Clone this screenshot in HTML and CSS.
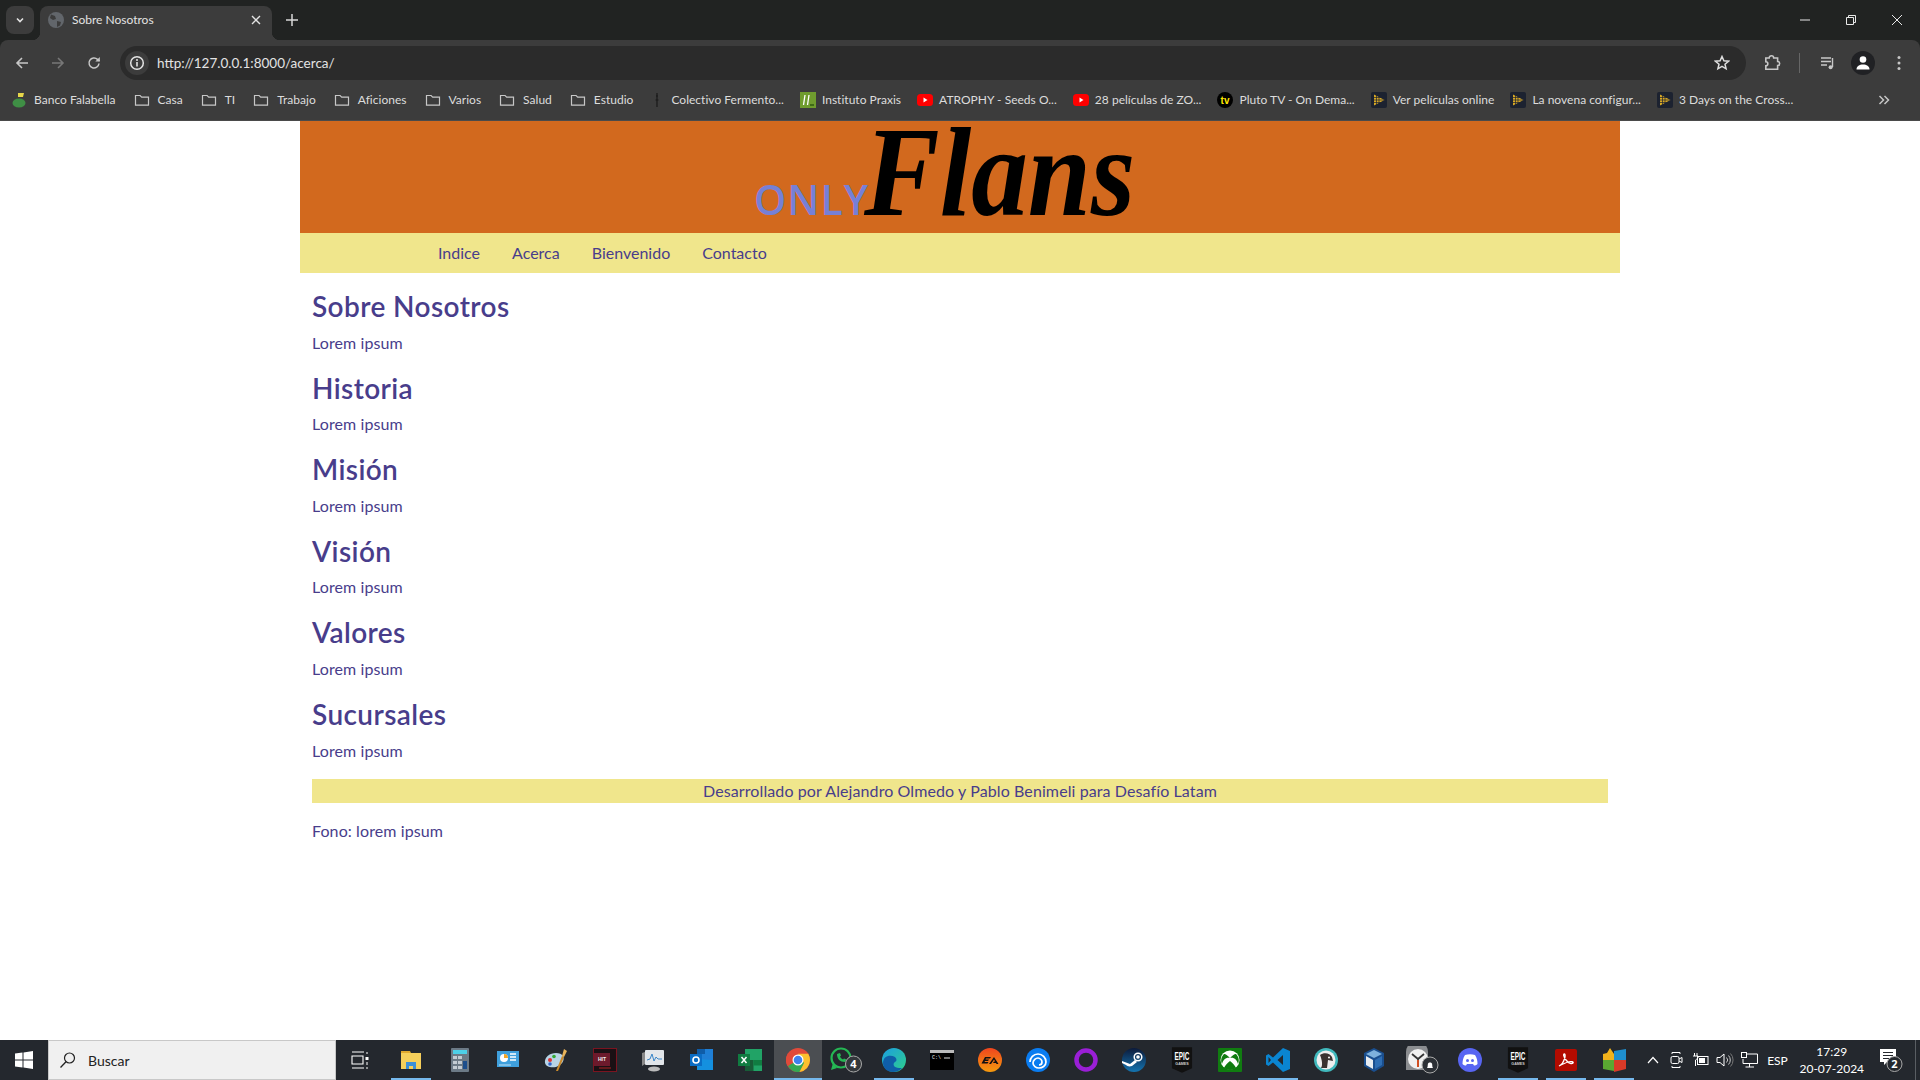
FILE: index.html

```html
<!DOCTYPE html>
<html lang="es">
<head>
  <meta charset="UTF-8">
  <title>Sobre Nosotros</title>
  <link rel="stylesheet" href="styles.css">
</head>
<body>

<svg class="defs" width="0" height="0">
  <symbol id="folder" viewBox="0 0 20 16">
    <path d="M3.500 3.500h4.600l1.600 1.600h6.800v8H3.500z" fill="none" stroke="#c7c7c7" stroke-width="1.200"/>
  </symbol>
  <symbol id="yt" viewBox="0 0 16 16">
    <rect x="0" y="2" width="16" height="12" rx="3.500" fill="#f00"/>
    <path d="M6.500 5.600v4.800L10.500 8z" fill="#fff"/>
  </symbol>
  <symbol id="gold" viewBox="0 0 16 16">
    <rect width="16" height="16" rx="2" fill="#1c2230"/>
    <path d="M3 2.500v11L13.500 8z" fill="#d9a925"/>
    <path d="M5.500 3v10M8 4.500v7M3 5.500h8M3 8h10M3 10.500h8" stroke="#1c2230" stroke-width=".7"/>
  </symbol>
</svg>

<div class="browser">
  <div class="tabstrip">
    <div class="tab-search">
      <svg width="12" height="12" viewBox="0 0 12 12"><path d="M3 4.500l3 3 3-3" fill="none" stroke="#e3e3e3" stroke-width="1.600"/></svg>
    </div>
    <div class="tab">
      <svg class="tab-icon" width="16" height="16" viewBox="0 0 16 16">
        <circle cx="8" cy="8" r="8" fill="#62666b"/>
        <path d="M3 2.500l4 1.500 1 3-3 1-3-2zM9 9l4 1-1 3.500-3 1.500z" fill="#3c3c3c"/>
      </svg>
      <span class="tab-title">Sobre Nosotros</span>
      <svg class="tab-close" width="10" height="10" viewBox="0 0 10 10"><path d="M1 1l8 8M9 1l-8 8" stroke="#e3e3e3" stroke-width="1.400"/></svg>
    </div>
    <svg class="tab-new" width="12" height="12" viewBox="0 0 12 12"><path d="M6 0v12M0 6h12" stroke="#d8d8d8" stroke-width="1.500"/></svg>
    <div class="win-buttons">
      <svg width="12" height="12" viewBox="0 0 12 12"><path d="M1 6h10" stroke="#e8e8e8"/></svg>
      <svg width="12" height="12" viewBox="0 0 12 12"><path d="M1.500 3.500h7v7h-7zM3.500 3.500v-2h7v7h-2" fill="none" stroke="#e8e8e8"/></svg>
      <svg width="12" height="12" viewBox="0 0 12 12"><path d="M1 1l10 10M11 1L1 11" stroke="#e8e8e8"/></svg>
    </div>
  </div>

  <div class="toolbar">
    <svg class="tool back" width="14" height="14" viewBox="0 0 14 14"><path d="M13 7H2M7 2L2 7l5 5" fill="none" stroke="#c7c7c7" stroke-width="1.600"/></svg>
    <svg class="tool forward" width="14" height="14" viewBox="0 0 14 14"><path d="M1 7h11M7 2l5 5-5 5" fill="none" stroke="#777" stroke-width="1.600"/></svg>
    <svg class="tool reload" width="14" height="14" viewBox="0 0 14 14"><path d="M12 7.500A5 5 0 1 1 10.500 3.400L12.500 5" fill="none" stroke="#c7c7c7" stroke-width="1.500"/><path d="M12.800 1v4.500H8.300z" fill="#c7c7c7"/></svg>
    <div class="urlbar">
      <div class="url-info">
        <svg width="16" height="16" viewBox="0 0 16 16"><circle cx="8" cy="8" r="6.300" fill="none" stroke="#e3e3e3" stroke-width="1.500"/><path d="M8 7v4.500" stroke="#e3e3e3" stroke-width="1.600"/><circle cx="8" cy="4.900" r="1" fill="#e3e3e3"/></svg>
      </div>
      <span class="url-text">http://127.0.0.1:8000/acerca/</span>
      <svg class="url-star" width="16" height="16" viewBox="0 0 16 16"><path d="M8 1.500l1.900 4.300 4.600.4-3.500 3 1.100 4.600L8 11.400l-4.100 2.400 1.100-4.600-3.500-3 4.600-.4z" fill="none" stroke="#dedede" stroke-width="1.500"/></svg>
    </div>
    <svg class="tool puzzle" width="18" height="18" viewBox="0 0 16 16"><path d="M2.500 3.500h3a2 2 0 0 1 4 0h3.500v3.200a1.800 1.800 0 0 1 0 3.600v3.200H2.500v-3a1.800 1.800 0 0 0 0-3.600z" fill="none" stroke="#c7c7c7" stroke-width="1.400"/></svg>
    <span class="tool-divider"></span>
    <svg class="tool media" width="16" height="16" viewBox="0 0 16 16"><path d="M1 3h10M1 6.500h10M1 10h6" stroke="#c7c7c7" stroke-width="1.400"/><path d="M12.500 3v9" stroke="#c7c7c7" stroke-width="1.400"/><circle cx="10.600" cy="12.200" r="2" fill="#c7c7c7"/></svg>
    <div class="avatar">
      <svg width="16" height="16" viewBox="0 0 16 16"><circle cx="8" cy="4.500" r="3.300" fill="#fff"/><path d="M1.500 14.500c0-3.500 3-5 6.500-5s6.500 1.500 6.500 5z" fill="#fff"/></svg>
    </div>
    <svg class="tool dots" width="4" height="16" viewBox="0 0 4 16"><circle cx="2" cy="2.500" r="1.500" fill="#c7c7c7"/><circle cx="2" cy="8" r="1.500" fill="#c7c7c7"/><circle cx="2" cy="13.500" r="1.500" fill="#c7c7c7"/></svg>
  </div>

  <div class="bookmarks">
    <div class="bm">
      <svg width="16" height="16" viewBox="0 0 16 16"><path d="M6 1h6l-1 4H6z" fill="#e6d64a"/><ellipse cx="7" cy="11" rx="6.500" ry="4.500" fill="#3f8f45"/></svg>
      <span>Banco Falabella</span>
    </div>
    <div class="bm"><svg width="20" height="16"><use href="#folder"/></svg><span>Casa</span></div>
    <div class="bm"><svg width="20" height="16"><use href="#folder"/></svg><span>TI</span></div>
    <div class="bm"><svg width="20" height="16"><use href="#folder"/></svg><span>Trabajo</span></div>
    <div class="bm"><svg width="20" height="16"><use href="#folder"/></svg><span>Aficiones</span></div>
    <div class="bm"><svg width="20" height="16"><use href="#folder"/></svg><span>Varios</span></div>
    <div class="bm"><svg width="20" height="16"><use href="#folder"/></svg><span>Salud</span></div>
    <div class="bm"><svg width="20" height="16"><use href="#folder"/></svg><span>Estudio</span></div>
    <div class="bm">
      <svg width="16" height="16" viewBox="0 0 16 16"><path d="M8 1v14M7 4h2M6.500 8h3" stroke="#1a1a1a" stroke-width="1.200"/></svg>
      <span>Colectivo Fermento...</span>
    </div>
    <div class="bm">
      <svg width="16" height="16" viewBox="0 0 16 16"><rect width="16" height="16" fill="#6f9c2e"/><path d="M5 3L3.500 13M9 3L7.500 13" stroke="#fff" stroke-width="1.300"/><path d="M10 13h4" stroke="#2f5a10" stroke-width="1.500"/></svg>
      <span>Instituto Praxis</span>
    </div>
    <div class="bm"><svg width="16" height="16"><use href="#yt"/></svg><span>ATROPHY - Seeds O...</span></div>
    <div class="bm"><svg width="16" height="16"><use href="#yt"/></svg><span>28 películas de ZO...</span></div>
    <div class="bm">
      <svg width="16" height="16" viewBox="0 0 16 16"><circle cx="8" cy="8" r="8" fill="#000"/><text x="8" y="11.500" text-anchor="middle" class="tv-mark">tv</text></svg>
      <span>Pluto TV - On Dema...</span>
    </div>
    <div class="bm"><svg width="16" height="16"><use href="#gold"/></svg><span>Ver películas online</span></div>
    <div class="bm"><svg width="16" height="16"><use href="#gold"/></svg><span>La novena configur...</span></div>
    <div class="bm"><svg width="16" height="16"><use href="#gold"/></svg><span>3 Days on the Cross...</span></div>
    <svg class="bm-more" width="12" height="12" viewBox="0 0 12 12"><path d="M1.500 2l4 4-4 4M6.500 2l4 4-4 4" fill="none" stroke="#c7c7c7" stroke-width="1.500"/></svg>
  </div>
</div>

<div class="page">
  <div class="container">
    <header class="banner">
      <div class="logo">
        <span class="logo-only">ONLY</span>
        <span class="logo-flans">Flans</span>
      </div>
    </header>
    <nav class="navbar">
      <a href="#">Indice</a>
      <a href="#">Acerca</a>
      <a href="#">Bienvenido</a>
      <a href="#">Contacto</a>
    </nav>
    <main class="content">
      <h3>Sobre Nosotros</h3>
      <p>Lorem ipsum</p>
      <h3>Historia</h3>
      <p>Lorem ipsum</p>
      <h3>Misión</h3>
      <p>Lorem ipsum</p>
      <h3>Visión</h3>
      <p>Lorem ipsum</p>
      <h3>Valores</h3>
      <p>Lorem ipsum</p>
      <h3>Sucursales</h3>
      <p>Lorem ipsum</p>
      <div class="credit">Desarrollado por Alejandro Olmedo y Pablo Benimeli para Desafío Latam</div>
      <p>Fono: lorem ipsum</p>
    </main>
  </div>
</div>

<div class="taskbar">
  <div class="start">
    <svg width="18" height="18" viewBox="0 0 18 18"><path d="M0 2.600L7.500 1.500v7H0zM8.500 1.400L18 0v8.500H8.500zM0 9.500h7.500v7L0 15.400zM8.500 9.500H18V18l-9.500-1.400z" fill="#fff"/></svg>
  </div>
  <div class="search">
    <svg width="18" height="18" viewBox="0 0 18 18"><circle cx="10.500" cy="7" r="5" fill="none" stroke="#222" stroke-width="1.200"/><path d="M7 10.800L1.500 16.500" stroke="#222" stroke-width="1.300"/></svg>
    <span>Buscar</span>
  </div>
  <div class="tb-slot tb-view">
    <svg width="18" height="18" viewBox="0 0 18 18"><path d="M1 1h12M1 17h12M1 5h11v8H1z" fill="none" stroke="#fff" stroke-width="1.100"/><path d="M15 2h2M15 17h2" stroke="#fff"/><rect x="14.500" y="6" width="3" height="3" fill="#fff"/><path d="M16 11v3" stroke="#fff"/></svg>
  </div>
  <div class="tb-slot tb-tight running">
    <svg width="24" height="24" viewBox="0 0 24 24"><path d="M2 3h9l1 2H2z" fill="#e0a92e"/><path d="M2 5h20v16H2z" fill="#f5cf5b"/><path d="M7 14h10v7h-3v-3h-4v3H7z" fill="#3c8fd8"/></svg>
  </div>
  <div class="tb-slot tb-tight">
    <svg width="20" height="24" viewBox="0 0 20 24"><rect x="1" width="18" height="24" rx="1" fill="#6c7a86"/><rect x="3" y="2" width="14" height="4" fill="#4dd0e8"/><path d="M3 8h4v3H3zM8 8h4v3H8zM3 13h4v3H3zM8 13h4v3H8zM3 18h4v3H3zM8 18h4v3H8z" fill="#c3ccd3"/><rect x="13" y="13" width="4" height="8" fill="#1d4f8c"/></svg>
  </div>
  <div class="tb-slot tb-tight">
    <svg width="22" height="18" viewBox="0 0 22 18"><rect width="22" height="16" fill="#3fa0dd"/><circle cx="7" cy="7" r="4" fill="#fff"/><path d="M7 7V3a4 4 0 0 1 4 4z" fill="#f5a623"/><path d="M13 3h6M13 6h6M13 9h6" stroke="#fff" stroke-width="1.500"/><path d="M2 14h12" stroke="#bfe3f7"/></svg>
  </div>
  <div class="tb-slot tb-tight">
    <svg width="24" height="24" viewBox="0 0 24 24"><path d="M1 15C0 9 6 5 12 5c3 0 6 1 7 3 2 4-1 9-7 11-5 1-10 0-11-4z" fill="#b8d4e6"/><circle cx="6" cy="12" r="2" fill="#d33"/><circle cx="10" cy="8.500" r="1.800" fill="#3a3"/><circle cx="6" cy="16" r="1.800" fill="#36c"/><path d="M12 23l6-15 2 1-6 14z" fill="#c98a2c"/><path d="M18 8l2-7 3 2-3 6z" fill="#e8b45a"/></svg>
  </div>
  <div class="tb-slot tb-tight">
    <svg width="24" height="24" viewBox="0 0 24 24"><rect width="24" height="24" fill="#1a1014"/><rect x=".5" y=".5" width="23" height="23" fill="none" stroke="#7a1420"/><rect x="1" y="5" width="16" height="13" fill="#6c1a2c"/><text x="9" y="13" text-anchor="middle" class="hit-mark">HIT</text><path d="M6 20h12" stroke="#a22"/></svg>
  </div>
  <div class="tb-slot tb-tight">
    <svg width="24" height="24" viewBox="0 0 24 24"><path d="M1 5l3-1v12l-3 2z" fill="#888"/><rect x="4" y="2" width="19" height="15" rx="1" fill="#e2e6ea"/><path d="M6 12l3-1 2-5 2 7 2-4 2 2h4" fill="none" stroke="#3a86c8"/><ellipse cx="13" cy="21" rx="6" ry="2.500" fill="#bbb"/></svg>
  </div>
  <div class="tb-slot tb-tight">
    <svg width="24" height="24" viewBox="0 0 24 24"><path d="M7 1h16v11H7z" fill="#1f7fd6"/><path d="M7 1h8v5H7z" fill="#0f5ca8"/><path d="M7 11l16 1v10H7z" fill="#1490df"/><rect y="6" width="12" height="12" fill="#0a6cc4"/><circle cx="6" cy="12" r="3" fill="none" stroke="#fff" stroke-width="1.600"/></svg>
  </div>
  <div class="tb-slot tb-tight">
    <svg width="24" height="22" viewBox="0 0 24 22"><path d="M7 0h17v22H7z" fill="#21a366"/><path d="M7 11h8.500v11H7z" fill="#185c37"/><path d="M15.500 11H24v5.500h-8.500z" fill="#107c41"/><rect y="5" width="12" height="12" fill="#107c41"/><path d="M3.500 8l5 6M8.500 8l-5 6" stroke="#fff" stroke-width="1.500"/></svg>
  </div>
  <div class="tb-slot tb-active running">
    <svg width="24" height="24" viewBox="0 0 24 24"><circle cx="12" cy="12" r="12" fill="#e04a3a"/><path d="M12 12L1.600 18A12 12 0 0 1 2 5.400z" fill="#e04a3a"/><path d="M2 18a12 12 0 0 0 11.500 6L19 14l-7-2z" fill="#34a853"/><path d="M24 12a12 12 0 0 0-1.800-6.300H12L18 15l-4.500 9A12 12 0 0 0 24 12z" fill="#fbc02d"/><circle cx="12" cy="12" r="5.500" fill="#fff"/><circle cx="12" cy="12" r="4.300" fill="#3f82ee"/></svg>
  </div>
  <div class="tb-slot">
    <svg width="34" height="26" viewBox="0 0 34 26"><circle cx="12" cy="11" r="9.500" fill="none" stroke="#25b754" stroke-width="2.200"/><path d="M4 16l-2 7 6-2" fill="#25b754"/><path d="M8 7c0 5 3 8 8 8l1.500-2.500-2.500-1-1 1c-2-1-2.500-2-3-3l1-1-1-2.500z" fill="#25b754"/><circle cx="24.500" cy="17" r="8" fill="#33373b" stroke="#aaa"/><text x="24.500" y="21" text-anchor="middle" class="badge-num">4</text></svg>
  </div>
  <div class="tb-slot running">
    <svg width="24" height="24" viewBox="0 0 24 24"><defs><linearGradient id="edge" x1="0" y1="0" x2="1" y2="1"><stop offset="0" stop-color="#1b9de2"/><stop offset="1" stop-color="#2fd08a"/></linearGradient></defs><circle cx="12" cy="12" r="12" fill="url(#edge)"/><path d="M1 15C1 8 8 6 13 9c2 2 2 4 0 5-3 2-1 6 4 6l3 0c-3 3-6 4-9 4C5 24 1 20 1 15z" fill="#0f5ea8"/></svg>
  </div>
  <div class="tb-slot">
    <svg width="24" height="20" viewBox="0 0 24 20"><rect width="24" height="20" fill="#000"/><rect width="24" height="3" fill="#bbb"/><text x="2" y="9" class="term-mark">C:\</text><path d="M14 8h6" stroke="#ddd"/></svg>
  </div>
  <div class="tb-slot">
    <svg width="24" height="24" viewBox="0 0 24 24"><defs><linearGradient id="ea" x1="0" y1="0" x2="0" y2="1"><stop offset="0" stop-color="#f0451e"/><stop offset="1" stop-color="#f59a0e"/></linearGradient></defs><circle cx="12" cy="12" r="12" fill="url(#ea)"/><path d="M7 9h6l-1 1.500H8l-.5 1H11l-1 1.500H7l-.5 1h4l-1 1.500H3.500zM16 9l4.500 7h-2l-.5-1h-3l1-1.500h1.200L16 11.500 13 16h-2z" fill="#111"/></svg>
  </div>
  <div class="tb-slot">
    <svg width="24" height="24" viewBox="0 0 24 24"><circle cx="12" cy="12" r="12" fill="#0a7cf0"/><path d="M4 14a8 8 0 1 1 16 0c0 4-4 6-7 6s-6-2-6-5c0-3 3-5 5-5s4 2 4 4-1 3-3 3" fill="none" stroke="#fff" stroke-width="1.700"/></svg>
  </div>
  <div class="tb-slot">
    <svg width="24" height="24" viewBox="0 0 24 24"><circle cx="12" cy="12" r="9.500" fill="none" stroke="#9a1fd6" stroke-width="4.500"/></svg>
  </div>
  <div class="tb-slot">
    <svg width="24" height="24" viewBox="0 0 24 24"><defs><linearGradient id="steam" x1="0" y1="0" x2="0" y2="1"><stop offset="0" stop-color="#0c1a3a"/><stop offset="1" stop-color="#1474b0"/></linearGradient></defs><circle cx="12" cy="12" r="12" fill="url(#steam)"/><circle cx="16" cy="9" r="3.800" fill="none" stroke="#fff" stroke-width="1.500"/><circle cx="16" cy="9" r="1.800" fill="#fff"/><path d="M0 13l8 3 5-4 2 2-5 4c-3 1-5 0-6-1l-4-2z" fill="#fff"/></svg>
  </div>
  <div class="tb-slot">
    <svg width="22" height="26" viewBox="0 0 24 28"><path d="M1 0h22v23l-11 5-11-5z" fill="#111"/><text x="12" y="8.800" text-anchor="middle" transform="scale(1 1.600)" class="epic-big">EPIC</text><text x="12" y="20" text-anchor="middle" class="epic-small">GAMES</text></svg>
  </div>
  <div class="tb-slot">
    <svg width="24" height="24" viewBox="0 0 24 24"><rect width="24" height="24" rx="1" fill="#107c10"/><circle cx="12" cy="12" r="9.500" fill="#fff"/><path d="M12 10C9 7 7 5.500 6 6 3 9 2.500 13 4 16c1-4 4-7 8-6zM12 10c3-3 5-4.500 6-4 3 3 3.500 7 2 10-1-4-4-7-8-6zM12 13c-3 2-5 5-6 7 3 2.500 9 2.500 12 0-1-2-3-5-6-7z" fill="#107c10"/></svg>
  </div>
  <div class="tb-slot running">
    <svg width="24" height="24" viewBox="0 0 24 24"><path d="M17 0l7 3v18l-7 3L7 14.500 2.500 18 0 16.500V7.500L2.500 6 7 9.500zM17 7l-5.500 5 5.500 5zM2.500 9v6L5 12z" fill="#0a85d1"/></svg>
  </div>
  <div class="tb-slot">
    <svg width="24" height="24" viewBox="0 0 24 24"><circle cx="12" cy="12" r="12" fill="#40b8bc"/><circle cx="12" cy="12" r="9.500" fill="#eee"/><path d="M6 7c4-3 10-2 12 2l1 4-5-1-1 8H7c2-3 1-8-1-13z" fill="#3a3230"/><circle cx="15" cy="9.500" r="1" fill="#fff"/></svg>
  </div>
  <div class="tb-slot">
    <svg width="22" height="24" viewBox="0 0 22 24"><path d="M11 0l10 5v13l-10 6-10-6V5z" fill="#1a4f8f"/><path d="M11 2l8 4-8 4-8-4z" fill="#7fb2dd"/><path d="M3 8l7 4v9l-7-4z" fill="#e8edf2"/><path d="M19 8l-7 4v9l7-4z" fill="#2f6fb5"/></svg>
  </div>
  <div class="tb-slot">
    <svg width="34" height="28" viewBox="0 0 34 28"><path d="M1 24V6a11 11 0 0 1 22 0v18z" fill="#8b8d90"/><circle cx="13" cy="13" r="10" fill="#f0f0f0"/><path d="M7 8l6 5 6-5M13 13v8" fill="none" stroke="#333" stroke-width="1.800"/><path d="M13 14v7" stroke="#e0501e" stroke-width="1.800"/><circle cx="25" cy="19" r="8" fill="#2c3035" stroke="#aaa"/><path d="M22 22c1-1 .5-3 1-4.500s3.500-1.500 4 0 0 3.500 1 4.500z" fill="#fff"/></svg>
  </div>
  <div class="tb-slot">
    <svg width="24" height="24" viewBox="0 0 24 24"><circle cx="12" cy="12" r="12" fill="#5865f2"/><path d="M7 7c3-1 7-1 10 0 2 3 2.500 6 2.500 9-1 1-2.500 1.500-3.500 1.500l-1-1.500H9l-1 1.500c-1 0-2.500-.5-3.500-1.500C4.500 13 5 10 7 7z" fill="#fff"/><circle cx="9.500" cy="12.500" r="1.500" fill="#5865f2"/><circle cx="14.500" cy="12.500" r="1.500" fill="#5865f2"/></svg>
  </div>
  <div class="tb-slot running">
    <svg width="22" height="26" viewBox="0 0 24 28"><path d="M1 0h22v23l-11 5-11-5z" fill="#111"/><text x="12" y="8.800" text-anchor="middle" transform="scale(1 1.600)" class="epic-big">EPIC</text><text x="12" y="20" text-anchor="middle" class="epic-small">GAMES</text></svg>
  </div>
  <div class="tb-slot running">
    <svg width="22" height="22" viewBox="0 0 22 22"><rect width="22" height="22" rx="2" fill="#b30b00"/><path d="M4 17c3-1 5-5 6-9 .3-2 0-3-.8-3S8 7 11 11s6 4 7 3-2-2-5-1-7 3-9 4z" fill="none" stroke="#fff" stroke-width="1.300"/></svg>
  </div>
  <div class="tb-slot running">
    <svg width="24" height="24" viewBox="0 0 24 24"><path d="M1 6l4-1 3-5 4 6v6H1z" fill="#f2b31c"/><path d="M12 3l12-2v11H12z" fill="#1f8fce"/><path d="M1 12h11v11L1 21z" fill="#5aa832"/><path d="M12 12h12v9l-12 3z" fill="#d83a28"/></svg>
  </div>
  <div class="tray">
    <svg class="tray-caret" width="12" height="8" viewBox="0 0 12 8"><path d="M1 7l5-5.500L11 7" fill="none" stroke="#fff" stroke-width="1.200"/></svg>
    <svg width="16" height="18" viewBox="0 0 16 18"><path d="M3 3V1.500h8V3M3 15v1.500h8V15" fill="none" stroke="#fff"/><rect x="2" y="5.500" width="8" height="7" rx="1.500" fill="none" stroke="#fff"/><path d="M10 8l3-1.500v5L10 10" fill="none" stroke="#fff"/></svg>
    <svg width="17" height="16" viewBox="0 0 17 16"><rect x="5.500" y="4.500" width="10.500" height="8" fill="none" stroke="#fff"/><rect x="7" y="6" width="6" height="5" fill="#fff"/><path d="M2.500 1v3M5 1v3M1 4h5v2L3.500 8v6" fill="none" stroke="#fff"/></svg>
    <svg width="18" height="16" viewBox="0 0 18 16"><path d="M1 5.500h3L8 2v12l-4-3.500H1z" fill="none" stroke="#fff"/><path d="M10.500 5.500a3.500 3.500 0 0 1 0 5M12.500 3.500a6.500 6.500 0 0 1 0 9" fill="none" stroke="#c8c8c8"/><path d="M14.500 1.500a9.500 9.500 0 0 1 0 13" fill="none" stroke="#777"/></svg>
    <svg width="17" height="16" viewBox="0 0 17 16"><path d="M4 2h12.500v9.500H2V7M8.500 11.500V15M4.500 15H13" fill="none" stroke="#fff"/><rect x=".5" y=".5" width="5" height="5" fill="#24282e" stroke="#fff"/></svg>
    <span class="tray-lang">ESP</span>
    <div class="clock"><span>17:29</span><span>20-07-2024</span></div>
    <svg class="tray-notif" width="26" height="26" viewBox="0 0 26 26"><path d="M2 2h16v13h-9l-3 3v-3H2z" fill="#fff"/><path d="M5 5.500h10M5 8.500h10M5 11.500h6" stroke="#24282e" stroke-width="1.200"/><circle cx="16.500" cy="17" r="7.500" fill="#24282e" stroke="#aaa"/><text x="16.500" y="21" text-anchor="middle" class="badge-num">2</text></svg>
    <span class="show-desktop"></span>
  </div>
</div>

</body>
</html>
```

FILE: styles.css

```css
* {
  box-sizing: border-box;
}
html, body {
  height: 100%;
}
body {
  margin: 0;
  display: flex;
  flex-direction: column;
  overflow: hidden;
  background-color: #fff;
  color: #483d8b;
  font-family: 'Lato', 'Open Sans', sans-serif;
  font-size: 16px;
  line-height: 24px;
}
svg {
  display: block;
  flex-shrink: 0;
}
.defs {
  position: absolute;
}

/* browser */
.browser {
  flex-shrink: 0;
  background-color: #212322;
}
.tabstrip {
  height: 40px;
  display: flex;
  align-items: flex-end;
  padding-left: 6px;
  color: #e3e3e3;
  font-size: 12px;
}
.tab-search {
  width: 28px;
  height: 28px;
  margin-bottom: 6px;
  border-radius: 8px;
  background-color: #3c3c3c;
  display: flex;
  align-items: center;
  justify-content: center;
}
.tab {
  position: relative;
  width: 232px;
  height: 34px;
  margin-left: 6px;
  border-radius: 8px 8px 0 0;
  background-color: #3c3c3c;
  display: flex;
  align-items: center;
  padding: 0 11px 6px 8px;
  line-height: 16px;
}
.tab::before, .tab::after {
  content: "";
  position: absolute;
  bottom: 0;
  width: 8px;
  height: 8px;
}
.tab::before {
  left: -8px;
  background: radial-gradient(circle at 0 0, transparent 8px, #3c3c3c 8.500px);
}
.tab::after {
  right: -8px;
  background: radial-gradient(circle at 100% 0, transparent 8px, #3c3c3c 8.500px);
}
.tab-title {
  margin-left: 8px;
  flex: 1;
}
.tab-new {
  margin: 0 0 14px 14px;
}
.win-buttons {
  margin-left: auto;
  align-self: center;
  display: flex;
  gap: 34px;
  padding-right: 17px;
}
.toolbar {
  height: 40px;
  display: flex;
  align-items: center;
  background-color: #3c3c3c;
  border-radius: 8px 8px 0 0;
  padding: 6px 0 0 15px;
}
.forward, .reload {
  margin-left: 22px;
}
.urlbar {
  width: 1626px;
  height: 34px;
  margin-left: 19px;
  border-radius: 17px;
  background-color: #2b2b2b;
  display: flex;
  align-items: center;
  padding: 0 16px 0 5px;
  color: #e3e3e3;
  font-size: 13.500px;
}
.url-info {
  width: 24px;
  height: 24px;
  border-radius: 50%;
  background-color: #3c3c3c;
  display: flex;
  align-items: center;
  justify-content: center;
}
.url-text {
  margin-left: 8px;
  flex: 1;
}
.puzzle {
  margin-left: 17px;
}
.tool-divider {
  width: 1px;
  height: 20px;
  margin-left: 18px;
  background-color: #666;
}
.media {
  margin-left: 20px;
}
.avatar {
  width: 24px;
  height: 24px;
  margin-left: 15px;
  border-radius: 50%;
  background-color: #202124;
  display: flex;
  align-items: center;
  justify-content: center;
}
.dots {
  margin-left: 22px;
}
.bookmarks {
  position: relative;
  height: 41px;
  display: flex;
  align-items: center;
  background-color: #3c3c3c;
  border-bottom: 1px solid #4a4a4a;
  padding-left: 12px;
  color: #dcdcdc;
  font-size: 12px;
  letter-spacing: .020px;
  gap: 16px;
}
.bm {
  display: flex;
  align-items: center;
  gap: 6px;
  white-space: nowrap;
}
.bm-more {
  position: absolute;
  right: 30px;
}
.tv-mark {
  font: bold 10px 'Liberation Sans', sans-serif;
  fill: #ffe800;
}
.epic-big {
  font: bold 7px 'Liberation Sans', sans-serif;
  fill: #fff;
}
.epic-small {
  font: bold 4px 'Liberation Sans', sans-serif;
  fill: #ccc;
}
.hit-mark {
  font: bold 5px 'Liberation Sans', sans-serif;
  fill: #eee;
}
.term-mark {
  font: 5px 'Liberation Mono', monospace;
  fill: #eee;
}
.badge-num {
  font: bold 11px 'Open Sans', sans-serif;
  fill: #fff;
}

/* page */
.page {
  flex: 1;
  min-height: 0;
}
.container {
  width: 1320px;
  margin: 0 auto;
}
.banner {
  height: 112px;
  background-color: #d2691e;
}
.logo {
  display: flex;
  align-items: baseline;
  padding-left: 454px;
  line-height: 103px;
}
.logo-only {
  color: #7680d6;
  font-family: 'Open Sans', sans-serif;
  font-weight: 600;
  font-size: 41px;
  letter-spacing: 1px;
}
.logo-flans {
  margin-left: -5px;
  color: #000;
  font-family: 'Liberation Serif', serif;
  font-style: italic;
  font-weight: bold;
  font-size: 126px;
  transform: scaleX(.9);
  transform-origin: left;
}
.navbar {
  height: 40px;
  background-color: #f0e68c;
  display: flex;
  align-items: center;
  padding-left: 138px;
  gap: 32px;
}
.navbar a {
  color: #483d8b;
  text-decoration: none;
}
.content {
  padding: 16px 12px 0;
  letter-spacing: .100px;
}
h3 {
  margin: 0 0 7px;
  padding-top: 1px;
  font-size: 28px;
  font-weight: 600;
  line-height: 33.600px;
  letter-spacing: .400px;
}
p {
  margin: 0 0 16px;
}
.credit {
  margin-bottom: 16px;
  background-color: #f0e68c;
  text-align: center;
}

/* windows taskbar */
.taskbar {
  height: 40px;
  flex-shrink: 0;
  display: flex;
  align-items: center;
  background-color: #24282e;
  color: #fff;
  font-size: 12px;
  line-height: 17px;
}
.start {
  width: 48px;
  height: 40px;
  flex-shrink: 0;
  display: flex;
  align-items: center;
  justify-content: center;
}
.search {
  width: 288px;
  height: 40px;
  flex-shrink: 0;
  background-color: #f0f0f0;
  border: 1px solid #c8c8c8;
  display: flex;
  align-items: center;
  padding-left: 10px;
  gap: 11px;
  color: #222;
  font-size: 14px;
}
.tb-slot {
  position: relative;
  width: 48px;
  height: 40px;
  flex-shrink: 0;
  display: flex;
  align-items: center;
  justify-content: center;
}
.tb-view {
  width: 51px;
  padding-right: 3px;
}
.tb-tight {
  width: 48.400px;
}
.tb-active {
  background-color: #4b4e52;
}
.running::after {
  content: "";
  position: absolute;
  left: 4px;
  right: 4px;
  bottom: 0;
  height: 2px;
  background-color: #76b9ed;
}
.tb-active.running::after {
  left: 0;
  right: 0;
}
.tray {
  margin-left: 9px;
  flex: 1;
  display: flex;
  align-items: center;
  gap: 7px;
}
.tray-caret {
  margin-right: 3px;
}
.tray-lang {
  margin-left: 2px;
}
.clock {
  width: 72px;
  margin-left: 1px;
  display: flex;
  flex-direction: column;
  align-items: center;
}
.tray-notif {
  margin-left: 3px;
}
.show-desktop {
  width: 1px;
  height: 40px;
  margin-left: auto;
  margin-right: 4px;
  background-color: #5a5e63;
}
```
